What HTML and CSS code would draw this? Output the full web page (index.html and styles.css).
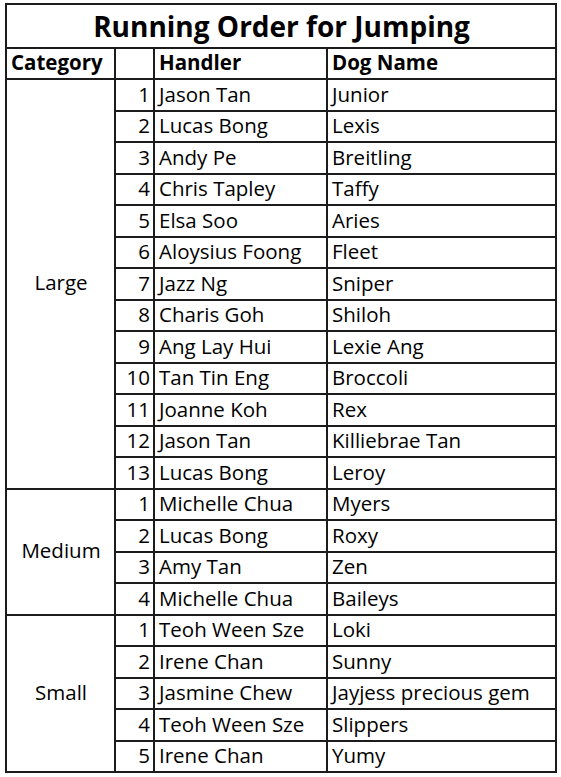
FILE: index.html
```html
<!DOCTYPE html>
<html>
<head>
<meta charset="utf-8">
<link rel="stylesheet" href="styles.css">
</head>
<body>
<table class="sheet">
  <colgroup>
    <col class="c-cat"><col class="c-num"><col class="c-hand"><col class="c-dog">
  </colgroup>
  <tr class="title-row"><td colspan="4" class="title">Running Order for Jumping</td></tr>
  <tr class="head-row"><td class="hd">Category</td><td class="hd"></td><td class="hd">Handler</td><td class="hd">Dog Name</td></tr>
  <tr><td class="cat" rowspan="13">Large</td><td class="num">1</td><td>Jason Tan</td><td>Junior</td></tr>
  <tr><td class="num">2</td><td>Lucas Bong</td><td>Lexis</td></tr>
  <tr><td class="num">3</td><td>Andy Pe</td><td>Breitling</td></tr>
  <tr><td class="num">4</td><td>Chris Tapley</td><td>Taffy</td></tr>
  <tr><td class="num">5</td><td>Elsa Soo</td><td>Aries</td></tr>
  <tr><td class="num">6</td><td>Aloysius Foong</td><td>Fleet</td></tr>
  <tr><td class="num">7</td><td>Jazz Ng</td><td>Sniper</td></tr>
  <tr><td class="num">8</td><td>Charis Goh</td><td>Shiloh</td></tr>
  <tr><td class="num">9</td><td>Ang Lay Hui</td><td>Lexie Ang</td></tr>
  <tr><td class="num">10</td><td>Tan Tin Eng</td><td>Broccoli</td></tr>
  <tr><td class="num">11</td><td>Joanne Koh</td><td>Rex</td></tr>
  <tr><td class="num">12</td><td>Jason Tan</td><td>Killiebrae Tan</td></tr>
  <tr><td class="num">13</td><td>Lucas Bong</td><td>Leroy</td></tr>
  <tr><td class="cat" rowspan="4">Medium</td><td class="num">1</td><td>Michelle Chua</td><td>Myers</td></tr>
  <tr><td class="num">2</td><td>Lucas Bong</td><td>Roxy</td></tr>
  <tr><td class="num">3</td><td>Amy Tan</td><td>Zen</td></tr>
  <tr><td class="num">4</td><td>Michelle Chua</td><td>Baileys</td></tr>
  <tr><td class="cat" rowspan="5">Small</td><td class="num">1</td><td>Teoh Ween Sze</td><td>Loki</td></tr>
  <tr><td class="num">2</td><td>Irene Chan</td><td>Sunny</td></tr>
  <tr><td class="num">3</td><td>Jasmine Chew</td><td>Jayjess precious gem</td></tr>
  <tr><td class="num">4</td><td>Teoh Ween Sze</td><td>Slippers</td></tr>
  <tr><td class="num">5</td><td>Irene Chan</td><td>Yumy</td></tr>
</table>
</body>
</html>
```
FILE: styles.css
```css
html, body {
  margin: 0;
  padding: 0;
  background: #ffffff;
}
body {
  padding: 3px 0 0 5px;
  font-family: "Open Sans", Lato, sans-serif;
  color: #000;
}
.sheet {
  border-collapse: collapse;
  table-layout: fixed;
  width: 550px;
}
.c-cat { width: 109px; }
.c-num { width: 39px; }
.c-hand { width: 173px; }
.c-dog { width: 229px; }
.sheet td {
  border: 2px solid #1c1c1c;
  padding: 0 3px 3px 4px;
  font-size: 20.5px;
  font-weight: 500;
  line-height: 26px;
  vertical-align: bottom;
  white-space: nowrap;
  overflow: hidden;
  height: 31.5px;
  box-sizing: border-box;
}
.sheet td.num {
  text-align: right;
  padding-right: 3px;
}
.sheet td.cat {
  text-align: center;
  vertical-align: middle;
}
.sheet td.hd {
  font-weight: 700;
  height: 31px;
}
.sheet td.title {
  font-weight: 700;
  font-size: 28px;
  text-align: center;
  height: 44px;
  line-height: 36px;
  padding-bottom: 3px;
}
```
